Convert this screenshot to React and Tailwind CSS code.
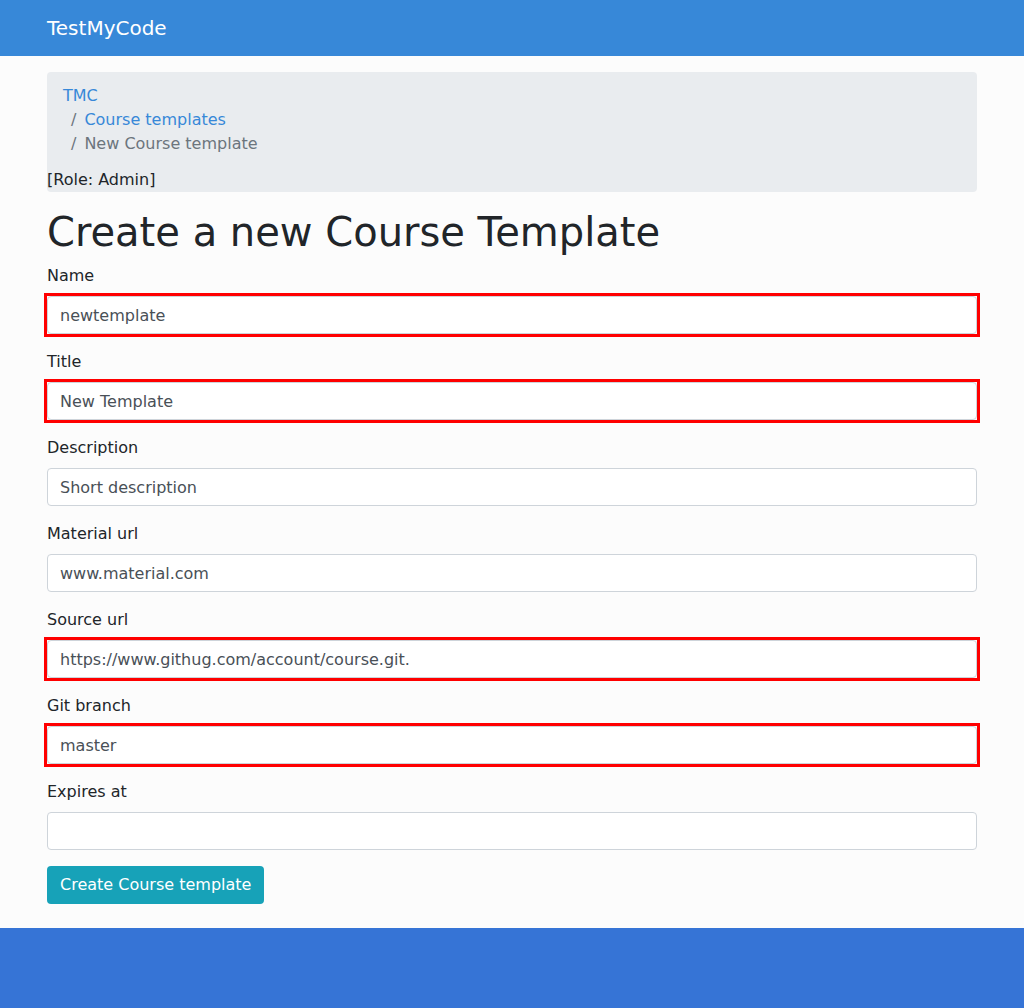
import React from 'react';

const fields = [
  { label: 'Name', value: 'newtemplate', invalid: true },
  { label: 'Title', value: 'New Template', invalid: true },
  { label: 'Description', value: 'Short description' },
  { label: 'Material url', value: 'www.material.com' },
  { label: 'Source url', value: 'https://www.githug.com/account/course.git.', invalid: true },
  { label: 'Git branch', value: 'master', invalid: true },
  { label: 'Expires at', value: '' },
];

const Field = ({ label, value, invalid }) => (
  <div className="mb-4">
    <label className="block mb-2 leading-6">{label}</label>
    {/* square red outline sits on a wrapper so it doesn't follow the input's radius */}
    <div className={invalid ? 'outline-[3px] outline-solid outline-[#ff0000]' : ''}>
      <input
        type="text"
        defaultValue={value}
        className="block w-full h-[38px] px-3 bg-white border border-[#ced4da] rounded text-[#495057] text-base outline-none"
      />
    </div>
  </div>
);

const App = () => {
  return (
    <div
      className="min-h-[1008px] flex flex-col bg-[#fcfcfc] text-[#212529] text-base"
      style={{ fontFamily: '"DejaVu Sans", sans-serif' }}
    >
      <header className="h-14 bg-[#3788d8] flex items-center">
        <div className="w-[930px] mx-auto text-white text-xl">TestMyCode</div>
      </header>

      <main className="w-[930px] mx-auto pt-4 pb-6">
        <div className="bg-[#e9ecef] rounded">
          <ol className="px-4 pt-3 pb-0 leading-6">
            <li className="text-[#3788d8]">TMC</li>
            <li className="pl-2">
              <span className="text-[#6c757d] pr-2">/</span>
              <span className="text-[#3788d8]">Course templates</span>
            </li>
            <li className="pl-2 text-[#6c757d]">
              <span className="pr-2">/</span>
              <span>New Course template</span>
            </li>
          </ol>
          <div className="pt-3 leading-6">[Role: Admin]</div>
        </div>

        <h1 className="mt-4 mb-2 text-[40px] leading-[48px]">Create a new Course Template</h1>

        {fields.map((f) => (
          <Field key={f.label} {...f} />
        ))}

        <button className="h-[38px] px-[13px] bg-[#17a2b8] text-white rounded leading-6">
          Create Course template
        </button>
      </main>

      <footer className="h-20 bg-[#3674d6] mt-auto" />
    </div>
  );
};

export default App;
